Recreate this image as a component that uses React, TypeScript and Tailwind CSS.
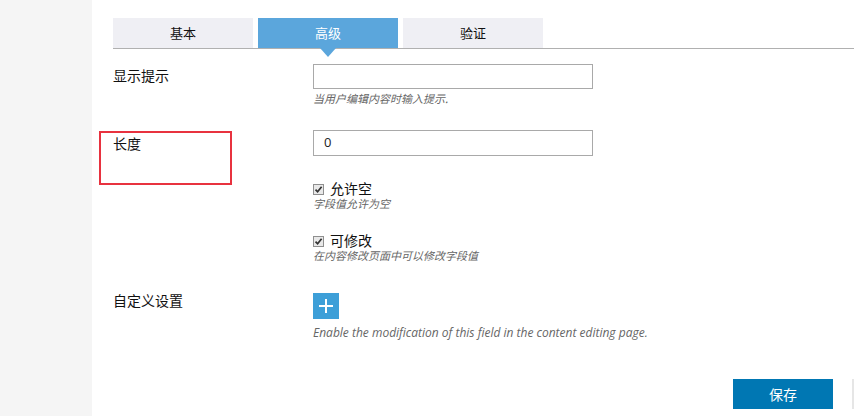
import React from "react";

const cjk = "font-['Noto_Sans_CJK_SC','Noto_Sans',sans-serif]";
const tight = "font-['Liberation_Sans','Noto_Sans_CJK_SC',sans-serif]";

const Tab: React.FC<{ label: string; active?: boolean }> = ({ label, active }) => (
  <div
    className={`relative w-[140px] h-[30px] flex items-center justify-center text-[13px] ${
      active ? "bg-[#5ba6dc] text-white" : "bg-[#efeff4] text-[#111]"
    }`}
  >
    {label}
    {active && (
      <span className="absolute left-1/2 -translate-x-1/2 top-[30px] w-0 h-0 border-l-[8px] border-r-[8px] border-t-[9px] border-l-transparent border-r-transparent border-t-[#5ba6dc]" />
    )}
  </div>
);

const Check: React.FC<{ label: string; hint: string }> = ({ label, hint }) => (
  <div className={`flex flex-col ${tight}`}>
    <label className="flex items-center gap-[6px] h-[16px]">
      <span className="w-[11px] h-[11px] border border-[#8f8f8f] bg-[#e9e9e9] flex items-center justify-center">
        <svg width="9" height="9" viewBox="0 0 9 9">
          <path d="M1.5 4.6 L3.6 6.8 L7.6 1.8" stroke="#333" strokeWidth="1.7" fill="none" />
        </svg>
      </span>
      <span className="text-[14px] leading-[16px] text-[#111]">{label}</span>
    </label>
    <span className="text-[11px] leading-[14px] italic text-[#666]">{hint}</span>
  </div>
);

export default function App() {
  return (
    <div className={`flex w-[854px] h-[416px] overflow-hidden bg-white ${cjk}`}>
      <div className="w-[92px] h-full bg-[#f5f5f5] shrink-0" />
      <div className="relative flex-1 pl-[21px] pt-[18px]">
        <div className="flex gap-[5px] border-b border-[#b0b0b0]">
          <Tab label="基本" />
          <Tab label="高级" active />
          <Tab label="验证" />
        </div>

        <div className="flex mt-[15px]">
          <div className="w-[200px] pt-[1px] text-[14px] leading-[20px] text-[#111]">显示提示</div>
          <div className="flex flex-col">
            <div className="w-[280px] h-[25px] border border-[#a9a9a9]" />
            <span className="text-[11px] leading-[14px] italic text-[#666] mt-[2px]">当用户编辑内容时输入提示.</span>
          </div>
        </div>

        <div className="flex mt-[25px]">
          <div className="w-[200px] pt-[3px] text-[14px] leading-[20px] text-[#111]">长度</div>
          <div className="flex flex-col">
            <div className="w-[280px] h-[26px] border border-[#a9a9a9] flex items-center px-[10px] text-[13px] text-[#222] font-['Open_Sans',sans-serif]">
              0
            </div>
            <div className="mt-[25px]">
              <Check label="允许空" hint="字段值允许为空" />
            </div>
            <div className="mt-[22px]">
              <Check label="可修改" hint="在内容修改页面中可以修改字段值" />
            </div>
          </div>
        </div>

        <div className="flex mt-[30px]">
          <div className="w-[200px] text-[14px] leading-[14px] text-[#111]">自定义设置</div>
          <div className="flex flex-col">
            <button className="w-[26px] h-[26px] bg-[#3d9fd8] flex items-center justify-center">
              <svg width="16" height="16" viewBox="0 0 16 16">
                <path d="M8 1 V15 M1 8 H15" stroke="white" strokeWidth="2" />
              </svg>
            </button>
            <span className="mt-[6px] text-[12px] leading-[16px] italic text-[#666] font-['Open_Sans',sans-serif]">
              Enable the modification of this field in the content editing page.
            </span>
          </div>
        </div>

        <div className="flex justify-end items-center gap-[19px] mt-[38px]">
          <button className="w-[100px] h-[30px] bg-[#0077b3] text-white text-[14px]">保存</button>
          <span className="w-[2px] h-[30px] bg-[#e6e6e6]" />
        </div>

        <div className="absolute left-[7px] top-[131px] w-[133px] h-[54px] border-2 border-[#e8323f]" />
      </div>
    </div>
  );
}
